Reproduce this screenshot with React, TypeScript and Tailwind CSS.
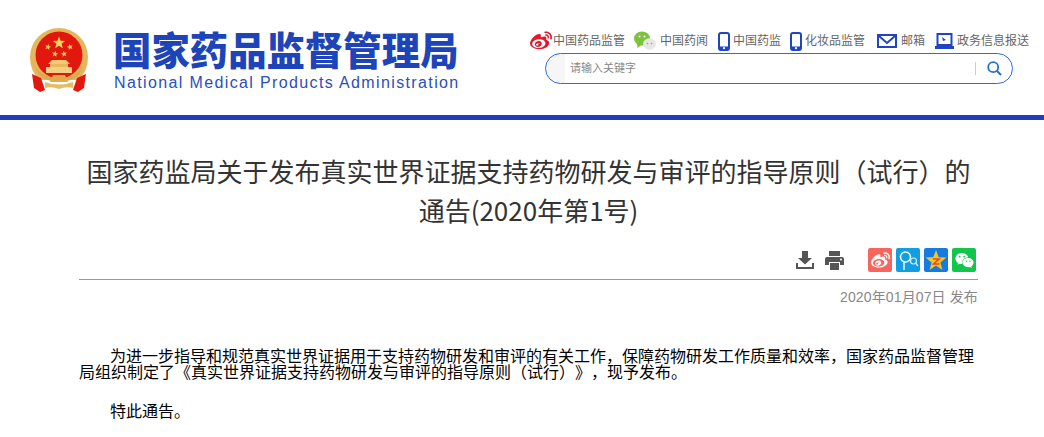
import React from 'react';
import { FaWeibo, FaWeixin } from 'react-icons/fa';

const cjk = { fontFamily: '"Liberation Sans", "Noto Sans CJK SC", sans-serif' };
const blue = '#1f45c4';

const starPoints = (cx: number, cy: number, r: number, rot = 0) =>
  Array.from({ length: 10 }, (_, i) => {
    const rad = i % 2 === 0 ? r : r * 0.42;
    const a = ((-90 + rot + i * 36) * Math.PI) / 180;
    return `${(cx + rad * Math.cos(a)).toFixed(2)},${(cy + rad * Math.sin(a)).toFixed(2)}`;
  }).join(' ');

const Emblem = () => (
  <svg width="60" height="64" viewBox="0 0 60 64">
    <path d="M1 29 A29 29 0 0 1 59 29 Q59 44 49 52 L11 52 Q1 44 1 29 Z" fill="#e6b65c" />
    <circle cx="30" cy="27" r="23.5" fill="#e2180e" />
    <polygon points={starPoints(30, 15, 6.5)} fill="#f8d25c" />
    <polygon points={starPoints(19, 19, 3.2, 15)} fill="#f8d25c" />
    <polygon points={starPoints(41, 19, 3.2, -15)} fill="#f8d25c" />
    <polygon points={starPoints(26, 26, 3.2, 10)} fill="#f8d25c" />
    <polygon points={starPoints(35, 26, 3.2, -10)} fill="#f8d25c" />
    <path d="M23 32 H37 L41 36 H19 Z" fill="#f0ca74" />
    <rect x="21" y="36" width="18" height="3" fill="#e8b95f" />
    <path d="M17 39 H43 V45 H17 Z" fill="#f2cf85" />
    <path d="M6 38 Q12 49 30 50 Q48 49 54 38 L51 46 Q42 54 30 54 Q18 54 9 46 Z" fill="#dca94f" />
    <path d="M3 46 L12 50 L16 62 L11 64 L5 60 Z" fill="#e2180e" />
    <path d="M57 46 L48 50 L44 62 L49 64 L55 60 Z" fill="#e2180e" />
    <path d="M16 54 Q30 59 44 54 V60 Q37 58 30 61 Q23 58 16 60 Z" fill="#e8bc62" />
    <path d="M24 47 H36 L39 54 H21 Z" fill="#e2a94a" />
  </svg>
);

const Phone = () => (
  <svg width="12" height="19" viewBox="0 0 12 19">
    <rect x="1" y="1" width="10" height="17" rx="2" fill="none" stroke={blue} strokeWidth="2" />
    <rect x="1" y="14.5" width="10" height="3.5" fill={blue} />
    <circle cx="6" cy="16.2" r="1.1" fill="#fff" />
  </svg>
);

const NavWechat = () => (
  <svg width="22" height="20" viewBox="0 0 22 20" className="mr-[4px]">
    <ellipse cx="8" cy="7.5" rx="8" ry="7" fill="#7cc23a" />
    <path d="M3 12 L3.5 17 L8 13.5 Z" fill="#7cc23a" />
    <circle cx="5.5" cy="5.5" r="1" fill="#fff" />
    <circle cx="10.5" cy="5.5" r="1" fill="#fff" />
    <ellipse cx="15.5" cy="13" rx="6.5" ry="5.8" fill="#e6e6e2" />
    <circle cx="13.5" cy="12.5" r="0.8" fill="#999" />
    <circle cx="17.5" cy="12.5" r="0.8" fill="#999" />
  </svg>
);

const NavLink = ({ icon, label, className }: { icon: React.ReactNode; label: string; className: string }) => (
  <div className={`flex items-center ${className}`}>
    {icon}
    <span className="text-[12px] leading-none text-[#666]">{label}</span>
  </div>
);

const ShareIcon = ({ className, children }: { className: string; children: React.ReactNode }) => (
  <div className={`w-6 h-6 rounded-[2px] flex items-center justify-center ${className}`}>{children}</div>
);

export default function App() {
  return (
    <div className="w-[1044px] h-[437px] bg-white overflow-hidden" style={cjk}>
      <header className="h-[120px] border-b-[5px] border-[#1f3fc0] flex justify-between">
        <div className="flex pl-[29px] pt-[28px]">
          <Emblem />
          <div className="ml-[25px] pt-[5px]">
            <div className="-ml-[1px] text-[38.4px] leading-[38px] font-black text-[#1d44b8] whitespace-nowrap">国家药品监督管理局</div>
            <div className="mt-[2px] text-[16px] leading-[20px] tracking-[1.37px] text-[#2a4fbd] whitespace-nowrap">
              National Medical Products Administration
            </div>
          </div>
        </div>
        <div className="w-[515px] pt-[31px]">
          <div className="flex h-[20px]">
            <NavLink className="w-[105px]" label="中国药品监管" icon={<FaWeibo className="text-[#e6162d] w-[24px] h-[22px]" />} />
            <NavLink className="w-[84px]" label="中国药闻" icon={<NavWechat />} />
            <NavLink className="w-[72px]" label="中国药监" icon={<span className="mr-[3px] flex"><Phone /></span>} />
            <NavLink className="w-[87px]" label="化妆品监管" icon={<span className="mr-[3px] flex"><Phone /></span>} />
            <NavLink className="w-[58px]" label="邮箱" icon={
              <svg width="20" height="14" viewBox="0 0 20 14" className="mr-[4px]">
                <rect x="1" y="1" width="18" height="12" fill="none" stroke={blue} strokeWidth="2" />
                <path d="M2 2 L10 9 L18 2" fill="none" stroke={blue} strokeWidth="2" />
              </svg>
            } />
            <NavLink className="w-[100px]" label="政务信息报送" icon={
              <svg width="19" height="17" viewBox="0 0 19 17" className="mr-[3px]">
                <rect x="2.5" y="1" width="14" height="11" fill="none" stroke={blue} strokeWidth="2" />
                <path d="M7 4 L11 7 L8 8 Z" fill={blue} />
                <rect x="0" y="13" width="19" height="3" fill={blue} />
              </svg>
            } />
          </div>
          <div className="ml-[16px] mt-[2px] w-[468px] h-[31px] rounded-full border border-[#2a6ae8] flex items-center pr-[10px] overflow-hidden bg-gradient-to-r from-[#f6f6f6] from-[4%] to-white to-[4%]">
            <span className="flex-1 pl-[24px] text-[11px] text-[#888]">请输入关键字</span>
            <span className="w-px h-[13px] bg-[#ccc] mr-[11px]" />
            <svg width="15" height="15" viewBox="0 0 15 15">
              <circle cx="6.2" cy="6.2" r="5" fill="none" stroke="#1f6fd8" strokeWidth="1.8" />
              <path d="M10 10 L14 14" stroke="#1f6fd8" strokeWidth="2" />
            </svg>
          </div>
        </div>
      </header>
      <main className="ml-[79px] w-[899px]">
        <h1 className="mt-[31px] text-center text-[26px] leading-[39px] font-normal text-[#333]" style={{ fontFamily: '"Noto Sans CJK SC", sans-serif' }}>
          国家药监局关于发布真实世界证据支持药物研发与审评的指导原则（试行）的<br />通告(2020年第1号)
        </h1>
        <div className="flex justify-end items-center h-[24px] mt-[19px] pr-[2px]">
          <svg width="18" height="18" viewBox="0 0 18 18" className="text-[#555]">
            <path d="M6 0 H12 V7 H16 L9 13.5 L2 7 H6 Z" fill="currentColor" />
            <path d="M0 12 H2 V16 H16 V12 H18 V18 H0 Z" fill="currentColor" />
          </svg>
          <svg width="19" height="19" viewBox="0 0 19 19" className="text-[#555] ml-[11px] mr-[24px]">
            <path d="M4 0 H15 V5 H4 Z" fill="currentColor" />
            <path d="M2 6 H17 A2 2 0 0 1 19 8 V14 H15 V11 H4 V14 H0 V8 A2 2 0 0 1 2 6 Z" fill="currentColor" />
            <path d="M5 12 H14 V19 H5 Z" fill="currentColor" />
            <circle cx="16" cy="8.5" r="1" fill="#fff" />
          </svg>
          <div className="flex gap-[4px]">
            <ShareIcon className="bg-[#f8655c]"><FaWeibo className="text-white w-[19px] h-[19px]" /></ShareIcon>
            <ShareIcon className="bg-[#129fe2]">
              <svg width="21" height="21" viewBox="0 0 21 21">
                <circle cx="7.5" cy="7" r="5" fill="none" stroke="#fff" strokeWidth="1.5" />
                <path d="M6 12 V20" stroke="#fff" strokeWidth="1.4" />
                <circle cx="15.5" cy="11" r="3" fill="none" stroke="#cfeefc" strokeWidth="1.2" />
                <path d="M17.5 13 L20 16" stroke="#cfeefc" strokeWidth="1.2" />
              </svg>
            </ShareIcon>
            <ShareIcon className="bg-[#157be0]">
              <svg width="22" height="22" viewBox="0 0 22 22">
                <polygon points={starPoints(11, 12, 11)} fill="#f7c51e" />
                <path d="M8 10 H14 L8.5 15 H14.5" fill="none" stroke="#e8491c" strokeWidth="1.6" />
              </svg>
            </ShareIcon>
            <ShareIcon className="bg-[#12c64b]"><FaWeixin className="text-white w-[19px] h-[19px]" /></ShareIcon>
          </div>
        </div>
        <div className="mt-[7px] border-t border-[#999] text-right text-[14px] leading-[18px] pt-[8px] tracking-[0.13px] text-[#888]">2020年01月07日 发布</div>
        <div className="mt-[41px] w-[896px] text-[16px] leading-[16px] text-black [text-spacing-trim:space-all]" style={{ fontFamily: '"Noto Sans CJK SC", sans-serif' }}>
          <p className="indent-[31px]">为进一步指导和规范真实世界证据用于支持药物研发和审评的有关工作，保障药物研发工作质量和效率，国家药品监督管理局组织制定了《真实世界证据支持药物研发与审评的指导原则（试行）》，现予发布。</p>
          <p className="indent-[31px] mt-[23px]">特此通告。</p>
        </div>
      </main>
    </div>
  );
}
